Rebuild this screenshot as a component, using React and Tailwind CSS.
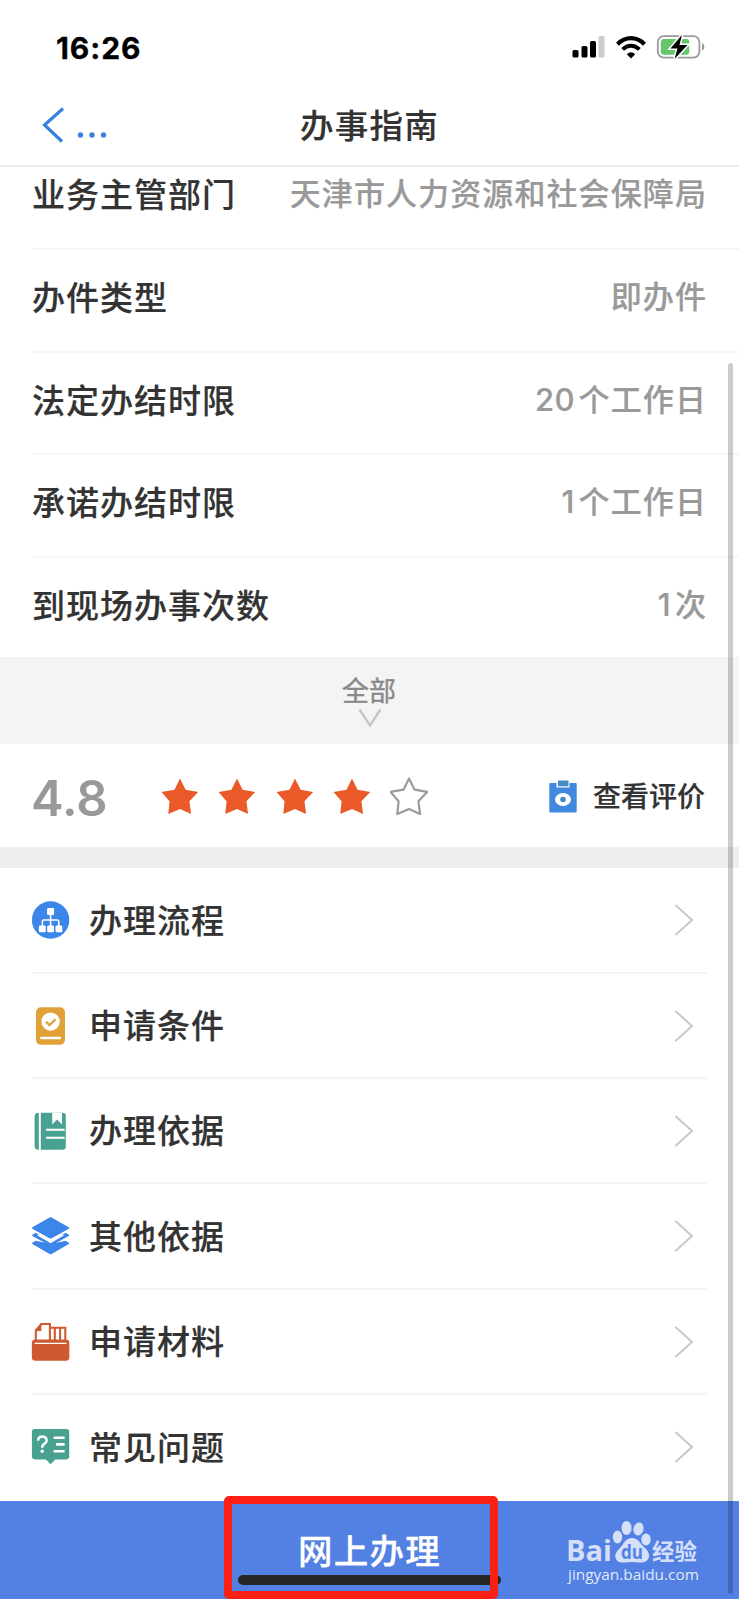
const infoRows = [
  { label: "业务主管部门", value: "天津市人力资源和社会保障局", height: "h-[83px]", pad: "pb-[26px]" },
  { label: "办件类型", value: "即办件", height: "h-[103px]", pad: "pb-[6px]" },
  { label: "法定办结时限", num: "20", value: "个工作日", height: "h-[102px]", pad: "pb-[5px]" },
  { label: "承诺办结时限", num: "1", value: "个工作日", height: "h-[103px]", pad: "pb-[6px]" },
  { label: "到现场办事次数", num: "1", value: "次", height: "h-[99px]", pad: "pb-[5px]", last: true },
];

const menuRows = [
  { label: "办理流程", icon: FlowIcon, height: "h-[106px]" },
  { label: "申请条件", icon: ConditionIcon, height: "h-[105px]" },
  { label: "办理依据", icon: BookIcon, height: "h-[105px]" },
  { label: "其他依据", icon: LayersIcon, height: "h-[106px]" },
  { label: "申请材料", icon: FolderIcon, height: "h-[105px]" },
  { label: "常见问题", icon: FaqIcon, height: "h-[106px]", last: true },
];

function FlowIcon() {
  return (
    <svg className="w-[38px] h-[38px]" viewBox="0 0 38 38">
      <circle cx="19" cy="19" r="18.7" fill="#3b86e8" />
      <g fill="#fff">
        <rect x="15.5" y="7" width="7" height="7" rx="1.2" />
        <rect x="7.3" y="24.5" width="6.8" height="6.8" rx="1.2" />
        <rect x="15.6" y="24.5" width="6.8" height="6.8" rx="1.2" />
        <rect x="23.9" y="24.5" width="6.8" height="6.8" rx="1.2" />
      </g>
      <path d="M19 13v12M10.800 25v-4.500q0-1.500 1.500-1.500h13.400q1.500 0 1.500 1.500V25" fill="none" stroke="#fff" strokeWidth="1.6" />
    </svg>
  );
}

function ConditionIcon() {
  return (
    <svg className="w-[38px] h-[38px]" viewBox="0 0 38 38">
      <rect x="4.4" y="0.2" width="29" height="37.6" rx="5" fill="#e1a137" />
      <circle cx="19" cy="14.6" r="9.2" fill="#fff" />
      <path d="M14.400 14.600l3.500 3.500 6-5.800" fill="none" stroke="#e1a137" strokeWidth="2.2" />
      <path d="M9.600 31h18.800" stroke="#fff" strokeWidth="2.4" strokeLinecap="round" />
    </svg>
  );
}

function BookIcon() {
  return (
    <svg className="w-[38px] h-[38px]" viewBox="0 0 38 38">
      <path d="M6 .8h1.200v37H6q-3-.6-3-3.500V4.300Q3 1.400 6 .8z" fill="#49a192" />
      <path d="M9.200.8H31q3.200 0 3.200 3.200v30.600q0 3.200-3.200 3.200H9.200z" fill="#49a192" />
      <path d="M20.600.8h9.800v11.600l-4.900-4.800-4.900 4.800z" fill="#fff" />
      <path d="M14.500 17.800H33M14.500 25.800H33" stroke="#fff" strokeWidth="2" />
    </svg>
  );
}

function LayersIcon() {
  return (
    <svg className="w-[38px] h-[38px]" viewBox="0 0 38 38">
      <path d="M18 .6q1-.6 2 0l17.200 9.700q1 .7 0 1.400L20 21.500q-1 .6-2 0L.8 11.700q-1-.7 0-1.400z" fill="#3b86e8" />
      <path d="M4 15.800L.8 17.700q-.8.600 0 1.200L4 20.800 19 29l15-8.200 3.200-1.900q.8-.6 0-1.200L34 15.800 19 24z" fill="#3b86e8" />
      <path d="M5.500 18.200l3.200-1.800L19 22l10.300-5.600 3.200 1.800L19 26.300z" fill="#fff" />
      <path d="M4 23.800L.8 25.800q-.8.600 0 1.200L18 36.900q1 .6 2 0L37.200 27q.8-.6 0-1.200L34 23.800 20 26.800h-2z" fill="#3b86e8" />
    </svg>
  );
}

function FolderIcon() {
  return (
    <svg className="w-[38px] h-[38px]" viewBox="0 0 38 38">
      <path d="M4.200 18V7.500L9.700 1h8.600v17M19 4.800h14.700V18M23.200 5v12M28.500 5v12" fill="none" stroke="#cf5a30" strokeWidth="2.1" />
      <path d="M3.800 8l6-7v7z" fill="#cf5a30" />
      <rect x="0" y="16.6" width="38" height="21.2" rx="4" fill="#cf5a30" />
      <path d="M3.200 20.300h31.600" stroke="#fff" strokeWidth="1.2" />
    </svg>
  );
}

function FaqIcon() {
  return (
    <svg className="w-[38px] h-[38px]" viewBox="0 0 38 38">
      <path d="M3.500 1h31q3.300 0 3.300 3.300v23.800q0 3.300-3.300 3.300h-10.800L19 36.300l-4.700-4.900H3.500q-3.300 0-3.300-3.300V4.300Q.2 1 3.500 1z" fill="#49a192" />
      <path d="M6.500 12.600q.2-4 4.300-4 4.200.2 4.200 3.800 0 2.300-2.200 3.400-2.200 1.100-2.200 4" fill="none" stroke="#fff" strokeWidth="2.5" />
      <circle cx="10.600" cy="23.200" r="1.7" fill="#fff" />
      <path d="M22 9.800h11M24.500 16.400H33M22 23.200h11" stroke="#fff" strokeWidth="2.6" />
    </svg>
  );
}

function Star({ filled }) {
  return (
    <svg className="w-[38px] h-[38px]" viewBox="0 0 38 38">
      <path
        d="M19 1.500l5.600 11.200 12.600 2.200-8.800 9.400 1.700 12.700L19 32.100 7.300 37l1.300-12.800L.5 14.900l13-2.200z"
        fill={filled ? "#e95a28" : "none"}
        stroke={filled ? "none" : "#9b9b9b"}
        strokeWidth="2.2"
        strokeLinejoin="round"
      />
    </svg>
  );
}

function StatusBar() {
  return (
    <div className="h-[94px] flex items-center justify-between pl-[56px] pr-[34px]">
      <span className="font-['Inter'] font-bold text-[30px] tracking-[0.9px] leading-none text-black pt-[1px] [-webkit-text-stroke:0.3px]">16:26</span>
      <div className="flex items-center">
        <svg className="w-[33px] h-[22px] mr-[11px]" viewBox="0 0 33 22">
          <rect x="0.500" y="14" width="6" height="7.5" rx="1.6" />
          <rect x="9.500" y="10" width="6" height="11.5" rx="1.6" />
          <rect x="18" y="5" width="6" height="16.5" rx="1.6" />
          <rect x="26.5" y="0" width="6" height="21.5" rx="1.6" fill="#ccc" />
        </svg>
        <svg className="w-[30px] h-[23px] mr-[10px]" viewBox="0 0 30 23">
          <path d="M1.500 8.200Q7.500 2.200 15 2.200t13.500 6" fill="none" stroke="#000" strokeWidth="4.3" />
          <path d="M6.600 13.400Q10.500 9.700 15 9.700t8.400 3.700" fill="none" stroke="#000" strokeWidth="4" />
          <path d="M10.800 18.200Q15 14.200 19.200 18.200L15 22.500z" />
        </svg>
        <svg className="w-[49px] h-[26px]" viewBox="0 0 49 26">
          <rect x="1.8" y="2.2" width="41.6" height="21.4" rx="6" fill="none" stroke="#9a9a9e" strokeWidth="1.8" />
          <rect x="4.8" y="5" width="28.5" height="15.8" rx="3" fill="#68c56c" />
          <path d="M46 9q2.400 1.200 2.400 4T46 17z" fill="#9a9a9e" />
          <path d="M26 .8L14.500 14.600h7L18.500 25 31.500 11h-8z" fill="#000" stroke="#fff" strokeWidth="3" paintOrder="stroke" />
        </svg>
      </div>
    </div>
  );
}

function InfoRow({ row }) {
  return (
    <div
      className={`ml-[32px] pr-[33px] flex items-center justify-between ${row.height} ${row.pad} ${row.last ? "" : "border-b-2 border-[#f6f6f6]"}`}
    >
      <span className="text-[33px] tracking-[1px] leading-none font-medium text-[#333] [-webkit-text-stroke:0.2px] pb-[2px]">{row.label}</span>
      <span className="flex items-center text-[31px] tracking-[1.1px] leading-none font-medium text-[#999] [-webkit-text-stroke:0.2px] pb-[6px]">
        {row.num && <span className="font-['Inter'] tracking-[0.2px] text-[31px] mr-[4px] pt-[4px]">{row.num}</span>}
        <span className="-mr-[1px]">{row.value}</span>
      </span>
    </div>
  );
}

function MenuRow({ row }) {
  const Icon = row.icon;
  return (
    <div className={`mx-[32px] flex items-center ${row.height} ${row.last ? "pb-[2px]" : "border-b-2 border-[#f4f4f4]"}`}>
      <div className="-translate-x-[0.4px]">
        <Icon />
      </div>
      <span className="ml-[19px] flex-1 text-[33px] tracking-[1px] leading-none font-medium text-[#333] [-webkit-text-stroke:0.2px] pb-[2px]">{row.label}</span>
      <svg className="w-[20px] h-[32px] mr-[13px]" viewBox="0 0 20 32">
        <path d="M2 1.500L18 16 2 30.500" fill="none" stroke="#c8c8c8" strokeWidth="2" strokeLinecap="round" />
      </svg>
    </div>
  );
}

function BaiduMark() {
  return (
    <svg className="absolute left-[567px] top-[18px] w-[136px] h-[68px]" viewBox="0 0 136 68" fill="#fff" fillOpacity="0.75">
      <text x="-1" y="42" fontFamily="Open Sans, sans-serif" fontWeight="700" fontSize="29" textLength="46" lengthAdjust="spacingAndGlyphs">Bai</text>
      <ellipse cx="50.5" cy="18" rx="4.7" ry="6.4" />
      <ellipse cx="59.5" cy="9" rx="5" ry="7" />
      <ellipse cx="71.5" cy="10" rx="5" ry="6.6" transform="rotate(12 71.5 10)" />
      <ellipse cx="79" cy="20.5" rx="4.7" ry="6" />
      <path d="M65 19q5 0 8 4.500 2.500 3.500 6 6.500 4.500 5 2.500 9.500-2.500 4.500-8.500 4-8-1-16 0-7 .5-8.500-4.500-1-5 3.500-9 3-3 5-6.500 3-4.500 8-4.500z" />
      <text x="54" y="39.5" fill="#5380e3" fillOpacity="1" fontFamily="Open Sans, sans-serif" fontWeight="700" fontSize="19" textLength="22" lengthAdjust="spacingAndGlyphs">du</text>
      <text x="85" y="40.5" fontFamily="Noto Sans CJK SC, sans-serif" fontWeight="700" fontSize="22.5" textLength="45" lengthAdjust="spacingAndGlyphs">经验</text>
      <text x="1" y="61" fontFamily="Open Sans, sans-serif" fontSize="15" fillOpacity="0.85" textLength="131" lengthAdjust="spacingAndGlyphs">jingyan.baidu.com</text>
    </svg>
  );
}

export default function App() {
  return (
    <div className="relative w-[739px] h-[1600px] overflow-hidden bg-white font-['Noto_Sans_CJK_SC',sans-serif]">
      <StatusBar />

      <header className="h-[73px] grid grid-cols-3 items-center border-b-2 border-[#eee] pb-[9px]">
        <div className="flex items-center pl-[42px] text-[#3a80e0]">
          <svg className="w-[24px] h-[36px]" viewBox="0 0 24 36">
            <path d="M21 1.500L2.500 18l17.500 16.500" fill="none" stroke="currentColor" strokeWidth="3.2" />
          </svg>
          <svg className="w-[30px] h-[6px] ml-[11px] mt-[19px]" viewBox="0 0 30 6" fill="currentColor">
            <circle cx="3.5" cy="3" r="2.7" />
            <circle cx="15" cy="3" r="2.7" />
            <circle cx="26.5" cy="3" r="2.7" />
          </svg>
        </div>
        <h1 className="text-center text-[33.5px] tracking-[1.2px] leading-none font-medium text-[#333] [-webkit-text-stroke:0.2px] pb-[2px]">办事指南</h1>
      </header>

      {infoRows.map((row) => (
        <InfoRow key={row.label} row={row} />
      ))}

      <div className="h-[87px] bg-[#f4f4f4] flex flex-col items-center pt-[19px]">
        <span className="text-[27px] leading-none text-[#888] [-webkit-text-stroke:0.4px] -ml-[1px]">全部</span>
        <svg className="w-[26px] h-[20px] mt-[5px]" viewBox="0 0 26 20">
          <path d="M2.500 1.500l10.500 16 10.500-16" fill="none" stroke="#c4c4c4" strokeWidth="2.3" />
        </svg>
      </div>

      <div className="h-[103px] flex items-center pl-[32px] pr-[34px]">
        <span className="w-[129px] font-['Inter'] font-semibold text-[49px] leading-none text-[#999] pt-[5px] -ml-[1px] mr-[1px]">4.8</span>
        <div className="flex gap-[19.3px]">
          <Star filled />
          <Star filled />
          <Star filled />
          <Star filled />
          <Star />
        </div>
        <div className="ml-auto flex items-center">
          <svg className="w-[28px] h-[34px] mr-[16px]" viewBox="0 0 28 34">
            <rect x="0.3" y="4" width="27.4" height="29.5" rx="1" fill="#4189df" />
            <path d="M7.500 3.500h13v5h-13z" fill="#fff" />
            <rect x="9" y="1.5" width="10.5" height="5.8" fill="#448bc8" />
            <ellipse cx="14" cy="20.5" rx="8" ry="6.5" fill="#fff" />
            <circle cx="14" cy="20.5" r="2.8" fill="#4189c8" />
          </svg>
          <span className="text-[28px] leading-none font-medium text-[#333] [-webkit-text-stroke:0.2px] pb-[1px]">查看评价</span>
        </div>
      </div>

      <div className="h-[21px] bg-[#eee]" />

      {menuRows.map((row) => (
        <MenuRow key={row.label} row={row} />
      ))}

      <footer className="relative h-[98px] bg-[#5380e3] flex justify-center pt-[31px]">
        <span className="text-[34.5px] tracking-[1.2px] leading-none font-medium text-white [-webkit-text-stroke:0.3px]">网上办理</span>
        <BaiduMark />
        {/* home indicator and highlight frame */}
        <div className="absolute left-[238px] top-[74px] w-[263px] h-[10px] rounded-full bg-[#262626]" />
        <div className="absolute left-[224px] -top-[5px] w-[274px] h-[103px] rounded-[5px] border-8 border-[#fc2014]" />
      </footer>

      <div className="absolute left-[728px] top-[363px] w-[5px] h-[1231px] rounded-full bg-black/20" />
    </div>
  );
}
